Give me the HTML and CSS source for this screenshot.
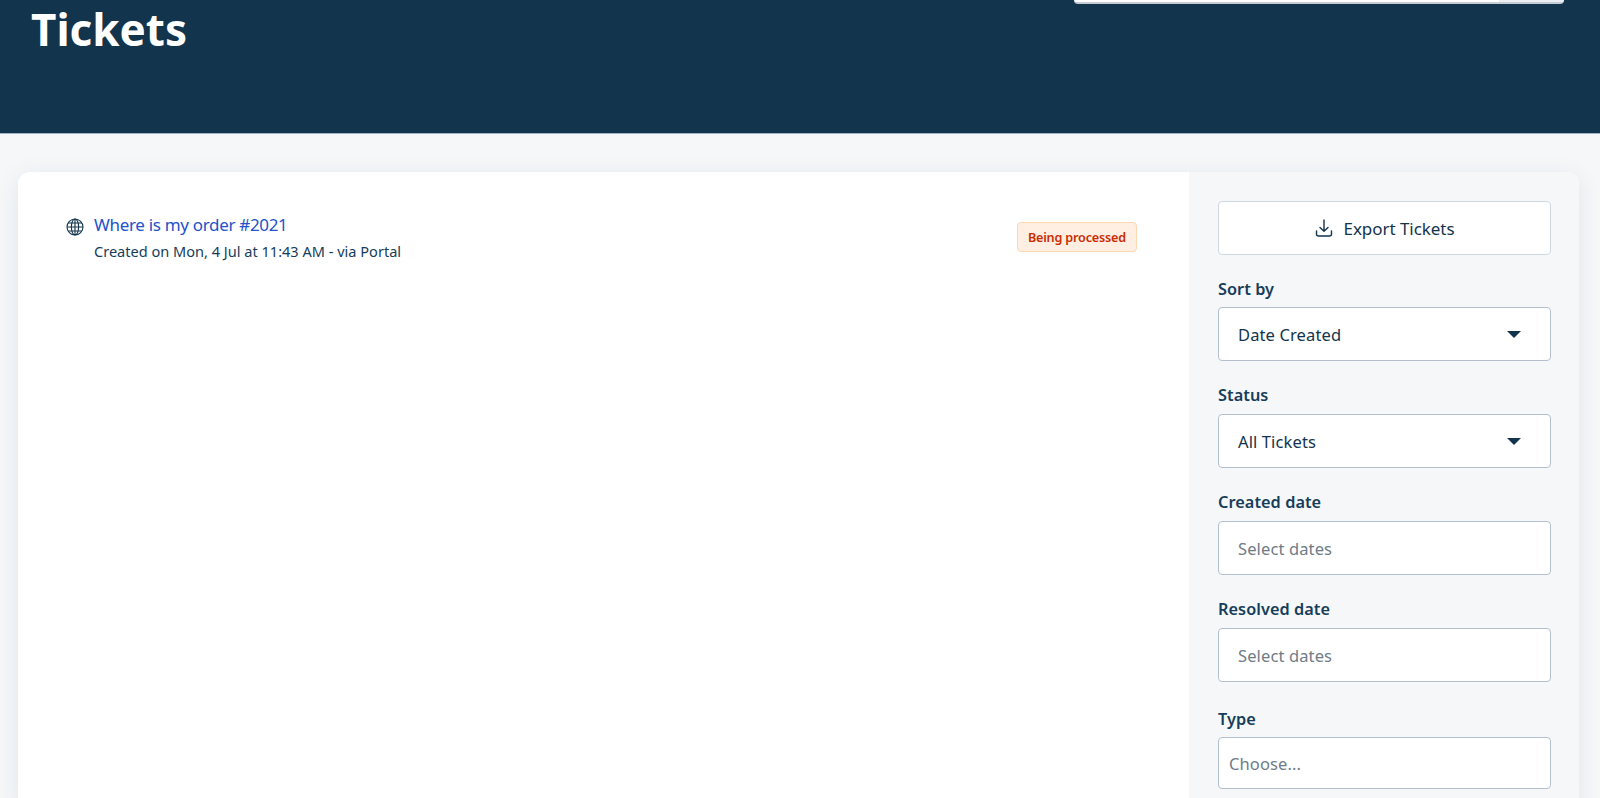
FILE: index.html
```html
<!DOCTYPE html>
<html lang="en">
<head>
    <meta charset="UTF-8">
    <meta name="viewport" content="width=device-width, initial-scale=1.0">
    <title>Tickets</title>
    <link rel="stylesheet" href="styles.css">
</head>
<body>
    <header class="page-header">
        <h1 class="page-title">Tickets</h1>
        <div class="search-box"><span class="search-btn"></span></div>
    </header>

    <main class="tickets-card">
        <section class="ticket-list">
            <div class="ticket-row">
                <svg class="ticket-icon" viewBox="0 0 18 18" fill="none" stroke="#12344d" stroke-width="1.1">
                    <circle cx="9" cy="9" r="8"/>
                    <ellipse cx="9" cy="9" rx="3.6" ry="8"/>
                    <path d="M9 1v16M1 9h16M2.2 5h13.6M2.2 13h13.6"/>
                </svg>
                <div class="ticket-info">
                    <a href="#" class="ticket-link">Where is my order #2021</a>
                    <p class="ticket-meta">Created on Mon, 4 Jul at 11:43 AM - via Portal</p>
                </div>
                <span class="status-badge">Being processed</span>
            </div>
        </section>

        <aside class="filters">
            <button class="export-btn">
                <svg class="export-icon" viewBox="0 0 20 20" fill="none" stroke="#12344d" stroke-width="1.4" stroke-linecap="round" stroke-linejoin="round">
                    <path d="M10 2v11M6 9.5l4 3.8 4-3.8"/>
                    <path d="M2.5 13v3a2 2 0 0 0 2 2h11a2 2 0 0 0 2-2v-3"/>
                </svg>
                Export Tickets
            </button>

            <label class="filter-label label-first">Sort by</label>
            <div class="filter-field">Date Created<span class="caret"></span></div>

            <label class="filter-label">Status</label>
            <div class="filter-field">All Tickets<span class="caret"></span></div>

            <label class="filter-label">Created date</label>
            <div class="filter-field placeholder">Select dates</div>

            <label class="filter-label">Resolved date</label>
            <div class="filter-field placeholder">Select dates</div>

            <label class="filter-label label-type">Type</label>
            <div class="filter-field placeholder field-choose">Choose...</div>
        </aside>
    </main>
</body>
</html>
```

FILE: styles.css
```css
* {
    margin: 0;
    padding: 0;
    box-sizing: border-box;
}

html, body {
    height: 798px;
    overflow: hidden;
}

body {
    font-family: 'Noto Sans', 'Open Sans', sans-serif;
    background: #f5f7f9;
    color: #12344d;
}

.page-header {
    height: 134px;
    background: #12344d;
    border-bottom: 1px solid #9fb4c4;
    display: flex;
    justify-content: space-between;
    align-items: flex-start;
    padding: 0 36px 0 31px;
}

.page-title {
    font-size: 44px;
    line-height: 58px;
    font-weight: 700;
    color: #fff;
}

.search-box {
    width: 490px;
    height: 4px;
    background: #fff;
    border-bottom: 2px solid #c4ccd6;
    border-radius: 0 0 6px 6px;
    display: flex;
    justify-content: flex-end;
    overflow: hidden;
}

.search-btn {
    width: 65px;
    height: 2px;
    background: #ebeff3;
}

.tickets-card {
    margin: 38px 21px 0 18px;
    height: 640px;
    display: flex;
    background: #fff;
    border-radius: 12px;
    box-shadow: 0 4px 24px rgba(18, 52, 77, 0.08);
}

.ticket-list {
    flex: 1;
    padding: 41px 52px 0 48px;
}

.ticket-row {
    display: flex;
    align-items: flex-start;
}

.ticket-icon {
    width: 18px;
    height: 18px;
    margin-top: 5px;
    margin-right: 10px;
    flex-shrink: 0;
}

.ticket-info {
    flex: 1;
}

.ticket-link {
    display: block;
    font-size: 17px;
    line-height: 24px;
    color: #2352c9;
    text-decoration: none;
    letter-spacing: -0.32px;
}

.ticket-meta {
    font-size: 14.55px;
    line-height: 20px;
    margin-top: 4px;
    color: #163d5a;
}

.status-badge {
    margin-top: 9px;
    height: 30px;
    padding: 0 10px;
    display: flex;
    align-items: center;
    font-size: 12.6px;
    font-weight: 600;
    letter-spacing: -0.17px;
    color: #c82d04;
    background: #ffefe2;
    border: 1px solid #fed7b5;
    border-radius: 4px;
}

.filters {
    width: 390px;
    flex-shrink: 0;
    background: #f5f7f9;
    padding: 29px 28px 0 29px;
    border-radius: 0 12px 12px 0;
}

.export-btn {
    width: 100%;
    height: 54px;
    display: flex;
    align-items: center;
    justify-content: center;
    gap: 9px;
    background: #fff;
    border: 1px solid #cfd7df;
    border-radius: 4px;
    font-family: inherit;
    font-size: 17px;
    letter-spacing: -0.05px;
    color: #12344d;
}

.export-icon {
    width: 20px;
    height: 20px;
}

.filter-label {
    display: block;
    font-size: 16.3px;
    line-height: 22px;
    font-weight: 600;
    letter-spacing: 0.05px;
    margin: 23px 0 8px;
    color: #163d5a;
}

.label-first {
    margin: 23px 0 7px;
}

.label-type {
    margin: 26px 0 7px;
}

.filter-field {
    height: 54px;
    display: flex;
    align-items: center;
    justify-content: space-between;
    padding: 0 29px 0 19px;
    background: #fff;
    border: 1px solid #b4c0ce;
    border-radius: 4px;
    font-size: 16.5px;
    letter-spacing: 0.12px;
    color: #12344d;
}

.placeholder {
    color: #6f7c87;
}

.field-choose {
    height: 52px;
    padding-left: 10px;
}

.caret {
    width: 0;
    height: 0;
    border-left: 7px solid transparent;
    border-right: 7px solid transparent;
    border-top: 7px solid #12344d;
}
```
